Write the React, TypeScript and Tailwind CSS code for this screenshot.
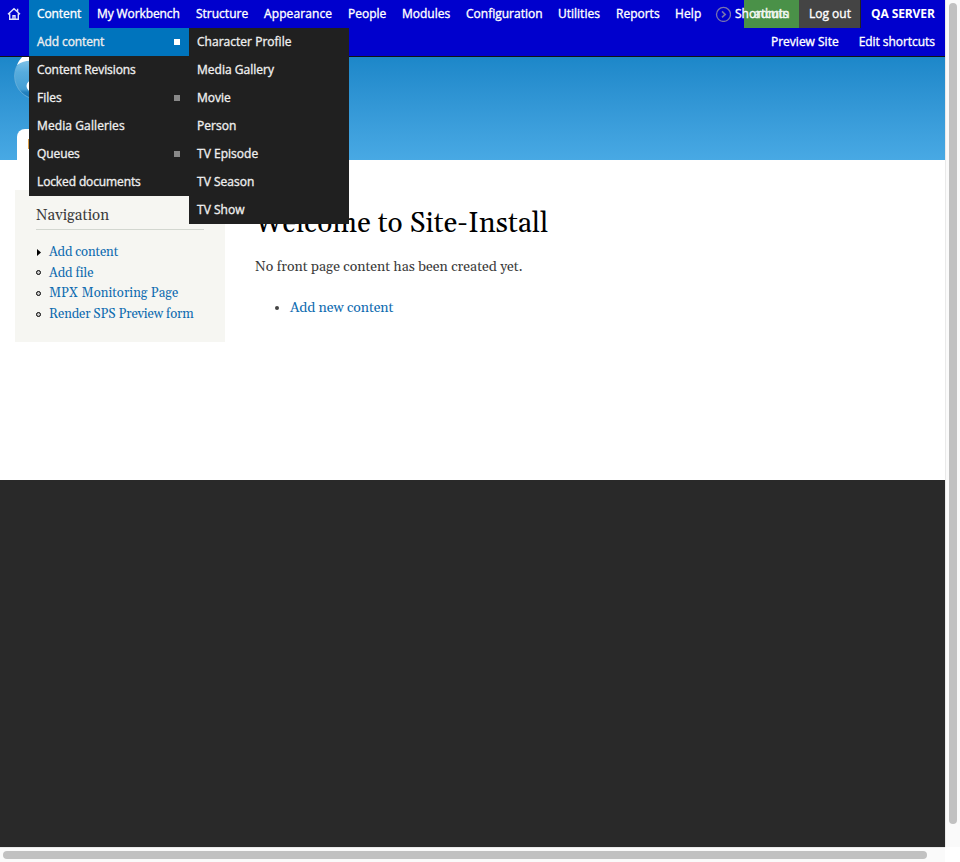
const menu = [
  { label: "Content", cls: "w-[60px] bg-[#0074bd] tracking-[-0.1px]" },
  { label: "My Workbench", cls: "w-[99px] tracking-[-0.1px]" },
  { label: "Structure", cls: "w-[68px]" },
  { label: "Appearance", cls: "w-[84px] tracking-[0.1px]" },
  { label: "People", cls: "w-[54px]" },
  { label: "Modules", cls: "w-[64px]" },
  { label: "Configuration", cls: "w-[92px]" },
  { label: "Utilities", cls: "w-[58px]" },
  { label: "Reports", cls: "w-[59px]" },
  { label: "Help", cls: "w-[43px] tracking-[0.1px]" },
];

const contentMenu = [
  { label: "Add content", tracking: "tracking-[-0.1px]", expandable: true, active: true },
  { label: "Content Revisions", tracking: "tracking-[-0.08px]" },
  { label: "Files", tracking: "tracking-normal", expandable: true },
  { label: "Media Galleries", tracking: "tracking-[0.1px]" },
  { label: "Queues", tracking: "tracking-[-0.1px]", expandable: true },
  { label: "Locked documents", tracking: "tracking-[-0.12px]" },
];

const addMenu = ["Character Profile", "Media Gallery", "Movie", "Person", "TV Episode", "TV Season", "TV Show"];

const links = [
  { label: "Add content", tracking: "tracking-[-0.12px]" },
  { label: "Add file", tracking: "tracking-[-0.05px]" },
  { label: "MPX Monitoring Page", tracking: "tracking-[0.05px]" },
  { label: "Render SPS Preview form", tracking: "tracking-[-0.14px]" },
];

function HomeIcon() {
  return (
    <svg width="14" height="14" viewBox="0 0 14 14" fill="none" stroke="#dfe1fa" strokeWidth="1.4">
      <path d="M1 7.3 7 1.7l6 5.6M2.7 6.5v5.8h8.6V6.5M10.6 1.7v3.2" />
      <path d="M6 12V8.7h2V12" />
    </svg>
  );
}

function AdminBar() {
  return (
    <header className="h-[57px] border-b border-[#111] bg-[#0000cd] font-['Open_Sans',sans-serif] text-[12px] leading-7 text-white [-webkit-text-stroke:0.35px]">
      <div className="flex h-7 whitespace-nowrap">
        <div className="flex w-[29px] shrink-0 items-center pl-[7px]"><HomeIcon /></div>
        {menu.map((m) => (
          <div key={m.label} className={`shrink-0 pl-2 ${m.cls}`}>{m.label}</div>
        ))}
        <div className="flex w-[34px] shrink-0 items-center pl-[5px]">
          <svg width="16" height="16" viewBox="0 0 16 16" fill="none" stroke="#7774ae" strokeWidth="1.3">
            <circle cx="8.5" cy="8.4" r="7" />
            <path d="m7 5.4 3.2 3-3.2 3" strokeWidth="1.6" />
          </svg>
        </div>
        <div className="relative w-[55px] shrink-0 bg-[#4a9148]">
          <span className="absolute -left-[9px] top-0">Shortcuts</span>
          <span className="absolute left-[10px] top-0 text-[#edf4ec]">admin</span>
        </div>
        <div className="w-[62px] shrink-0 border-r border-[#222] bg-[#444] pl-[10px]">Log out</div>
        <div className="w-[84px] shrink-0 pl-[10px] font-bold tracking-[-0.1px] [-webkit-text-stroke:0]">QA SERVER</div>
      </div>
      <div className="flex h-7 justify-end gap-5 pr-[10px]">
        <span>Preview Site</span>
        <span className="tracking-[-0.05px]">Edit shortcuts</span>
      </div>
    </header>
  );
}

function Menus() {
  return (
    <div className="absolute left-[29px] top-7 flex items-start font-['Open_Sans',sans-serif] text-[12px] leading-7 text-[#eee] [-webkit-text-stroke:0.35px]">
      <ul className="w-40 bg-[#202020]">
        {contentMenu.map((m) => (
          <li key={m.label} className={`flex h-7 items-center justify-between pl-2 pr-[9px] ${m.tracking} ${m.active ? "bg-[#0074bd]" : ""}`}>
            {m.label}
            {m.expandable && <span className={`size-[6px] ${m.active ? "bg-white" : "bg-[#888]"}`} />}
          </li>
        ))}
      </ul>
      <ul className="w-40 bg-[#202020]">
        {addMenu.map((m) => <li key={m} className="h-7 pl-2 tracking-[0.02px]">{m}</li>)}
      </ul>
    </div>
  );
}

function Logo() {
  return (
    <svg className="absolute left-[14px] top-0" width="40" height="46" viewBox="0 57 40 46">
      <defs>
        <linearGradient id="drop" gradientUnits="userSpaceOnUse" x1="0" y1="57" x2="0" y2="100">
          <stop offset="0" stopColor="#8cc8ea" />
          <stop offset="0.35" stopColor="#57acdd" />
          <stop offset="0.75" stopColor="#459fd5" />
          <stop offset="0.82" stopColor="#2382c0" />
          <stop offset="1" stopColor="#1a72b0" />
        </linearGradient>
      </defs>
      <circle cx="24" cy="76" r="23.4" fill="url(#drop)" stroke="#6db2dc" strokeWidth="0.8" />
      <path d="M3 65q2-5 6-9h9v5q-7-1-15 4Z" fill="#fff" />
      <ellipse cx="19" cy="86" rx="6.5" ry="6" fill="#fff" />
    </svg>
  );
}

export default function App() {
  return (
    <div className="grid h-[862px] w-[960px] grid-cols-[945px_15px] grid-rows-[847px_15px] overflow-hidden bg-white font-[Gelasio,Georgia,'Liberation_Serif',serif]">
      <div className="relative flex flex-col overflow-hidden bg-[#292929]">
        <AdminBar />
        <div className="relative flex h-[103px] items-end bg-linear-to-b from-[#1c87c9] to-[#48a9e4] pl-[17px]">
          <Logo />
          <div className="h-[31px] w-16 rounded-t-[8px] bg-white pl-[11px] pt-[10px]"><div className="h-[10px] w-px bg-[#d69a43]" /></div>
        </div>
        <main className="flex h-[320px] items-start bg-white pl-[15px] pt-[30px]">
          <aside className="h-[152px] w-[210px] bg-[#f6f6f2] px-[21px] pt-[13px]">
            <h2 className="h-[27px] border-b border-[#d3d7d0] text-[15px] leading-[25px] tracking-[0.05px] text-[#3b3b3b]">Navigation</h2>
            <ul className="pt-3 text-[13px] text-[#0f6cb0]">
              {links.map((l, i) => (
                <li key={l.label} className={`flex h-[20.6px] items-center whitespace-nowrap leading-5 ${l.tracking}`}>
                  <svg className="mr-2 shrink-0" width="5" height="7" viewBox="0 0 5 7">
                    {i === 0 ? <path d="M1 0v7l4-3.5Z" fill="#000" /> : <circle cx="2.5" cy="3.5" r="2" fill="#ccc" stroke="#000" />}
                  </svg>
                  {l.label}
                </li>
              ))}
            </ul>
          </aside>
          <section className="pl-[30px] pt-4 text-[#3b3b3b]">
            <h1 className="text-[28px] leading-9 tracking-[0.14px] text-black">Welcome to Site-Install</h1>
            <p className="mt-[14px] text-[14px] leading-[22px]">No front page content has been created yet.</p>
            <ul className="mt-[19px] flex items-center pl-[20px] text-[14px] leading-[22px]">
              <li className="flex items-center tracking-[-0.08px] text-[#0f6cb0]"><span className="mr-[11px] size-1 rounded-full bg-[#444]" />Add new content</li>
            </ul>
          </section>
        </main>
        <Menus />
      </div>
      <div className="flex justify-center border-l border-[#e9e9e9] bg-[#fafafa] pt-[3px]">
        <div className="h-[821px] w-2 rounded-full bg-[#c1c1c1]" />
      </div>
      <div className="flex items-center border-t border-[#e9e9e9] bg-[#fafafa] pl-[3px]">
        <div className="h-2 w-[924px] rounded-full bg-[#c1c1c1]" />
      </div>
      <div className="bg-white" />
    </div>
  );
}
